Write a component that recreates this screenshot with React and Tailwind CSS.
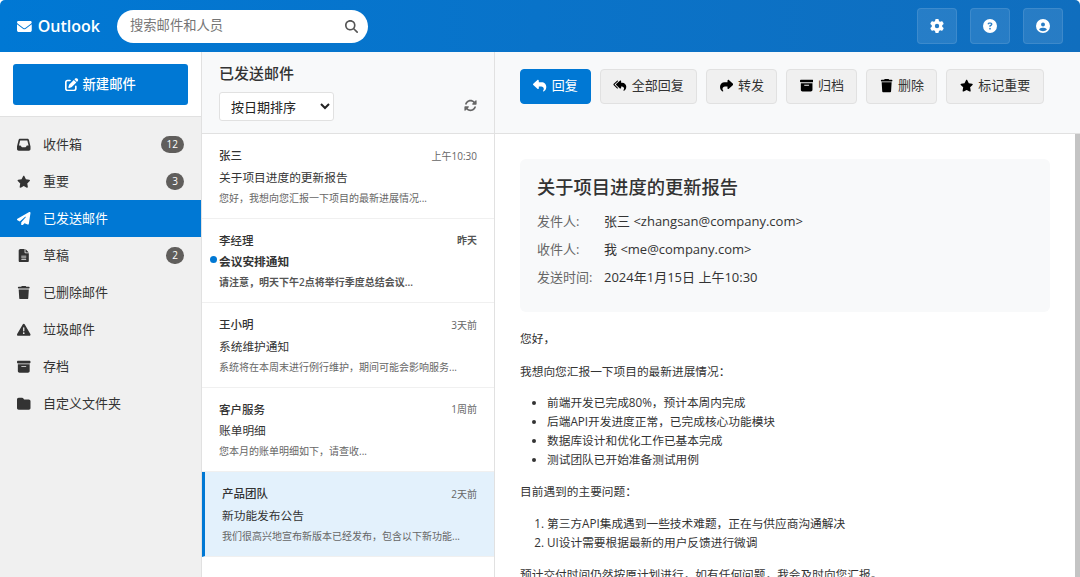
import {
  FaBoxArchive,
  FaCircleQuestion,
  FaCircleUser,
  FaEnvelope,
  FaFileLines,
  FaFolder,
  FaGear,
  FaInbox,
  FaMagnifyingGlass,
  FaPaperPlane,
  FaPenToSquare,
  FaReply,
  FaReplyAll,
  FaRotate,
  FaShare,
  FaStar,
  FaTrash,
  FaTriangleExclamation,
} from "react-icons/fa6";

const folders = [
  { icon: FaInbox, label: "收件箱", count: 12 },
  { icon: FaStar, label: "重要", count: 3 },
  { icon: FaPaperPlane, label: "已发送邮件", active: true },
  { icon: FaFileLines, label: "草稿", count: 2 },
  { icon: FaTrash, label: "已删除邮件" },
  { icon: FaTriangleExclamation, label: "垃圾邮件" },
  { icon: FaBoxArchive, label: "存档" },
  { icon: FaFolder, label: "自定义文件夹" },
];

const emails = [
  { sender: "张三", time: "上午10:30", subject: "关于项目进度的更新报告", preview: "您好，我想向您汇报一下项目的最新进展情况..." },
  { sender: "李经理", time: "昨天", subject: "会议安排通知", preview: "请注意，明天下午2点将举行季度总结会议...", unread: true },
  { sender: "王小明", time: "3天前", subject: "系统维护通知", preview: "系统将在本周末进行例行维护，期间可能会影响服务..." },
  { sender: "客户服务", time: "1周前", subject: "账单明细", preview: "您本月的账单明细如下，请查收..." },
  { sender: "产品团队", time: "2天前", subject: "新功能发布公告", preview: "我们很高兴地宣布新版本已经发布，包含以下新功能...", selected: true },
];

const actions = [
  { icon: FaReply, label: "回复", primary: true },
  { icon: FaReplyAll, label: "全部回复" },
  { icon: FaShare, label: "转发" },
  { icon: FaBoxArchive, label: "归档" },
  { icon: FaTrash, label: "删除" },
  { icon: FaStar, label: "标记重要" },
];

function Header() {
  return (
    <header className="h-[52px] shrink-0 flex items-center justify-between pl-[17px] pr-[17px] rounded-t-[5px] bg-gradient-to-r from-[#0078d4] to-[#106ebe] text-white">
      <div className="flex items-center">
        <div className="flex items-center gap-[6px] w-[83px] text-[16px] font-semibold whitespace-nowrap">
          <FaEnvelope className="text-[17px]" />
          <span>Outlook</span>
        </div>
        <div className="ml-[17px] w-[251px] h-[33px] rounded-full bg-white flex items-center justify-between pl-[13px] pr-[10px] text-[#757575]">
          <span className="text-[13.3px]">搜索邮件和人员</span>
          <FaMagnifyingGlass className="text-[13px] text-[#555]" />
        </div>
      </div>
      <div className="flex items-center gap-[12.5px]">
        {[FaGear, FaCircleQuestion, FaCircleUser].map((Icon, i) => (
          <button key={i} className="w-[40.5px] h-[36px] rounded-[4px] bg-white/10 border border-white/10 flex items-center justify-center">
            <Icon className="text-[14px]" />
          </button>
        ))}
      </div>
    </header>
  );
}

function Sidebar() {
  return (
    <aside className="w-[202px] shrink-0 bg-[#f0f0f0] border-r border-[#e1e1e1] flex flex-col">
      <div className="h-[65px] px-[13px] pt-[12px] bg-white border-b border-[#e1e1e1]">
        <button className="w-full h-[41px] rounded-[3px] bg-[#0078d4] text-white flex items-center justify-center gap-[4px] text-[13.3px] font-medium">
          <FaPenToSquare className="text-[13.3px]" />
          新建邮件
        </button>
      </div>
      <nav className="pt-[9px]">
        {folders.map((f) => (
          <div key={f.label} className={"h-[37px] flex items-center pl-[17px] pr-[17px] text-[13px] " + (f.active ? "bg-[#0078d4] text-white" : "text-[#333]")}>
            <span className="w-[26px] shrink-0 flex">
              <f.icon className="h-[13.5px] w-auto" />
            </span>
            <span className="flex-1">{f.label}</span>
            {f.count && (
              <span className="min-w-[18px] h-[17px] px-[6px] rounded-full bg-[#605e5c] text-white text-[10px] flex items-center justify-center">
                {f.count}
              </span>
            )}
          </div>
        ))}
      </nav>
    </aside>
  );
}

function EmailRow({ email }) {
  const { sender, time, subject, preview, unread, selected } = email;
  return (
    <div className={"relative h-[84.5px] border-b border-[#f0f0f0] pr-[17px] pt-[13.5px] " + (selected ? "bg-[#e3f1fc] border-l-[3px] border-l-[#0078d4] pl-[17px]" : "pl-[17px]")}>
      {unread && <span className="absolute left-[8px] top-[37.5px] w-[7px] h-[7px] rounded-full bg-[#0078d4]" />}
      <div className="flex justify-between items-center h-[17px]">
        <span className="text-[11.5px] text-[#333] font-medium">{sender}</span>
        <span className={"text-[10px] " + (unread ? "font-semibold text-[#555]" : "text-[#666]")}>{time}</span>
      </div>
      <div className={"mt-[4px] h-[17px] text-[11.7px] text-[#333] leading-[17px] " + (unread ? "font-bold" : "")}>{subject}</div>
      <div className={"mt-[4px] text-[10px] leading-[17px] truncate " + (unread ? "font-semibold text-[#555]" : "text-[#666]")}>{preview}</div>
    </div>
  );
}

function EmailList() {
  return (
    <section className="w-[293px] shrink-0 border-r border-[#e1e1e1] flex flex-col">
      <div className="h-[82px] shrink-0 px-[17px] pt-[11px] bg-[#f8f9fa] border-b border-[#e1e1e1]">
        <h2 className="text-[15px] font-medium text-[#333] leading-[20px]">已发送邮件</h2>
        <div className="mt-[9px] flex items-center justify-between">
          <select className="w-[115px] h-[29px] pl-[7px] text-[13px] text-[#222] bg-white border border-[#e1e1e1] rounded-[3px]">
            <option>按日期排序</option>
          </select>
          <FaRotate className="text-[13px] text-[#666] mb-[3px]" />
        </div>
      </div>
      {emails.map((e) => (
        <EmailRow key={e.sender} email={e} />
      ))}
    </section>
  );
}

function Reader() {
  return (
    <main className="flex-1 min-w-0 flex flex-col">
      <div className="h-[82px] shrink-0 px-[25px] bg-[#f8f9fa] border-b border-[#e1e1e1] flex items-start pt-[16.5px] gap-[9px]">
        {actions.map((a) => (
          <button
            key={a.label}
            className={
              "h-[35px] px-[12.4px] rounded-[4px] flex items-center gap-[5px] text-[13px] border " +
              (a.primary ? "bg-[#0078d4] border-[#0078d4] text-white" : "bg-[#f0f0f0] border-[#e1e1e1] text-[#333]")
            }
          >
            <a.icon className={"h-[13.3px] w-auto " + (a.primary ? "text-white" : "text-black")} />
            {a.label}
          </button>
        ))}
      </div>
      <div className="flex-1 min-h-0 flex">
        <div className="flex-1 min-w-0 overflow-hidden px-[25px] pt-[25px] text-[#333]">
          <div className="h-[153px] rounded-[6px] bg-[#f8f9fa] px-[17px] pt-[15px] text-[13px]">
            <h1 className="text-[18.3px] font-medium leading-[26px] text-[#333]">关于项目进度的更新报告</h1>
            <div className="mt-[12px] flex flex-col gap-[9px]">
              <div className="flex h-[19px] items-center"><span className="w-[67px] text-[#666]">发件人:</span><span>张三 &lt;zhangsan@company.com&gt;</span></div>
              <div className="flex h-[19px] items-center"><span className="w-[67px] text-[#666]">收件人:</span><span>我 &lt;me@company.com&gt;</span></div>
              <div className="flex h-[19px] items-center"><span className="w-[67px] text-[#666]">发送时间:</span><span>2024年1月15日 上午10:30</span></div>
            </div>
          </div>
          <div className="mt-[17px] text-[11.7px] leading-[19px]">
            <p>您好，</p>
            <p className="mt-[14px]">我想向您汇报一下项目的最新进展情况：</p>
            <ul className="mt-[12px] ml-[27px] list-disc">
              <li>前端开发已完成80%，预计本周内完成</li>
              <li>后端API开发进度正常，已完成核心功能模块</li>
              <li>数据库设计和优化工作已基本完成</li>
              <li>测试团队已开始准备测试用例</li>
            </ul>
            <p className="mt-[13px]">目前遇到的主要问题：</p>
            <ol className="mt-[13px] ml-[27px] list-decimal">
              <li>第三方API集成遇到一些技术难题，正在与供应商沟通解决</li>
              <li>UI设计需要根据最新的用户反馈进行微调</li>
            </ol>
            <p className="mt-[13px]">预计交付时间仍然按原计划进行，如有任何问题，我会及时向您汇报。</p>
          </div>
        </div>
        <div className="w-[5px] shrink-0 bg-[#c4c4c4]" />
      </div>
    </main>
  );
}

export default function App() {
  return (
    <div className="h-[577px] w-[1080px] overflow-hidden flex flex-col bg-white font-['Open_Sans','Noto_Sans_CJK_SC',sans-serif]">
      <Header />
      <div className="flex flex-1 min-h-0">
        <Sidebar />
        <EmailList />
        <Reader />
      </div>
    </div>
  );
}
